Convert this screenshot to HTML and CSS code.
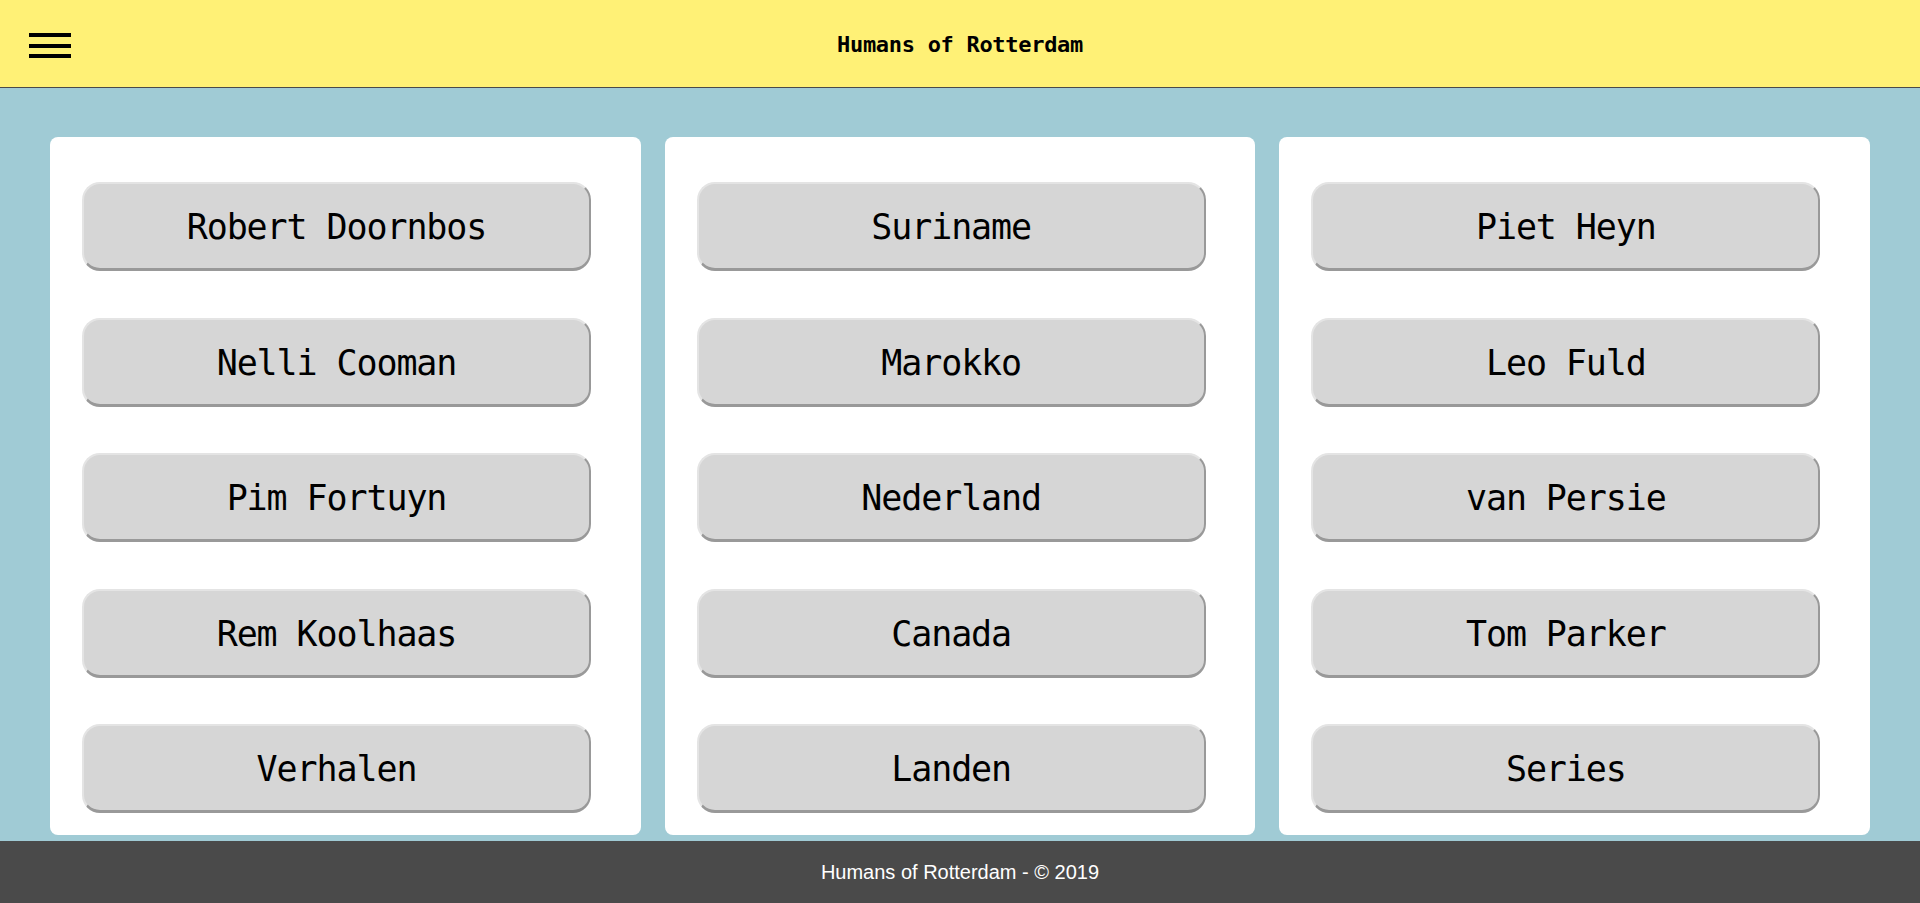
FILE: index.html
```html
<!DOCTYPE html>
<html lang="nl">
<head>
<meta charset="utf-8">
<title>Humans of Rotterdam</title>
<link rel="stylesheet" href="styles.css">
</head>
<body>
<header class="topbar">
  <div class="menu">
    <svg width="42" height="26" viewBox="0 0 42 26" aria-hidden="true">
      <rect x="0" y="0" width="42" height="4" fill="#000"/>
      <rect x="0" y="11" width="42" height="4" fill="#000"/>
      <rect x="0" y="21" width="42" height="4" fill="#000"/>
    </svg>
  </div>
  <h1 class="title">Humans of Rotterdam</h1>
  <div></div>
</header>
<main class="content">
  <section class="card">
    <button class="btn">Robert Doornbos</button>
    <button class="btn">Nelli Cooman</button>
    <button class="btn">Pim Fortuyn</button>
    <button class="btn">Rem Koolhaas</button>
    <button class="btn">Verhalen</button>
  </section>
  <section class="card">
    <button class="btn">Suriname</button>
    <button class="btn">Marokko</button>
    <button class="btn">Nederland</button>
    <button class="btn">Canada</button>
    <button class="btn">Landen</button>
  </section>
  <section class="card">
    <button class="btn">Piet Heyn</button>
    <button class="btn">Leo Fuld</button>
    <button class="btn">van Persie</button>
    <button class="btn">Tom Parker</button>
    <button class="btn">Series</button>
  </section>
</main>
<footer class="footer">Humans of Rotterdam - © 2019</footer>
</body>
</html>
```
FILE: styles.css
```css
html, body {
  margin: 0;
  padding: 0;
}
body {
  background: #a0cbd5;
  font-family: "DejaVu Sans Mono", monospace;
  height: 903px;
  overflow: hidden;
}
.topbar {
  height: 87px;
  background: #fff176;
  border-bottom: 1px solid #4a4a4a;
  display: grid;
  grid-template-columns: 1fr auto 1fr;
  align-items: center;
}
.menu {
  padding-left: 29px;
  display: flex;
  align-items: center;
  height: 100%;
  padding-top: 4px;
  box-sizing: border-box;
}
.menu svg {
  display: block;
}
.title {
  margin: 0;
  font-family: "DejaVu Sans Mono", monospace;
  font-weight: bold;
  font-size: 22px;
  letter-spacing: -0.3px;
  color: #000;
  padding-top: 1px;
}
.content {
  display: grid;
  grid-template-columns: repeat(3, 1fr);
  gap: 24px;
  padding: 49px 50px 6px;
}
.card {
  background: #fff;
  border-radius: 8px;
  padding: 45px 0 22px 32px;
  display: flex;
  flex-direction: column;
  gap: 46.5px;
}
.btn {
  width: 509px;
  height: 89px;
  box-sizing: border-box;
  background: #d6d6d6;
  border-style: solid;
  border-width: 2px;
  border-color: #e4e4e4 #999 #999 #e4e4e4;
  border-bottom-width: 3px;
  border-radius: 18px;
  font-family: "DejaVu Sans Mono", monospace;
  font-size: 35px;
  letter-spacing: -1.1px;
  color: #000;
  padding: 2px 0 0;
  text-align: center;
}
.footer {
  height: 62px;
  background: #4a4a4a;
  color: #fff;
  font-family: "Liberation Sans", Arial, sans-serif;
  font-size: 20px;
  display: flex;
  align-items: center;
  justify-content: center;
}
```
